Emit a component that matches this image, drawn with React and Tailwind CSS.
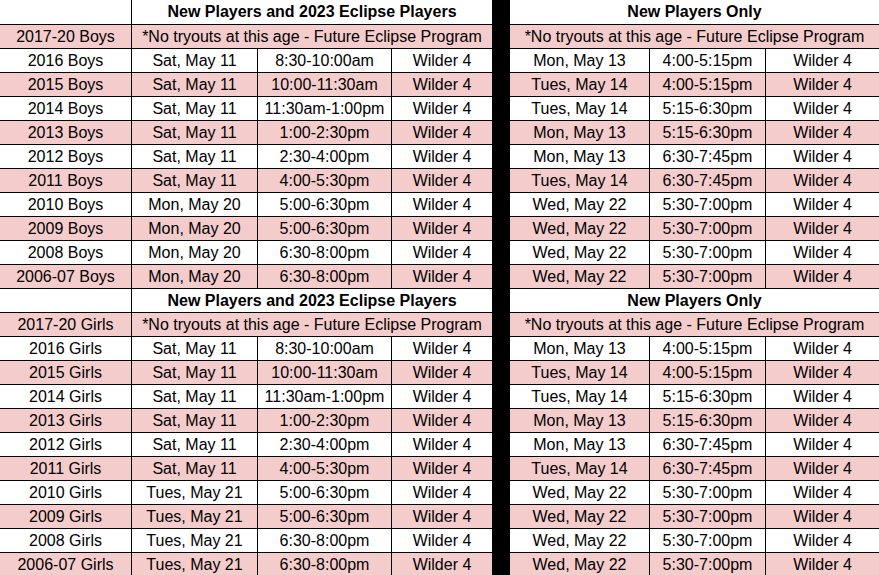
import React from "react";

const boys = [
  ["2016 Boys", "Sat, May 11", "8:30-10:00am", "Mon, May 13", "4:00-5:15pm"],
  ["2015 Boys", "Sat, May 11", "10:00-11:30am", "Tues, May 14", "4:00-5:15pm"],
  ["2014 Boys", "Sat, May 11", "11:30am-1:00pm", "Tues, May 14", "5:15-6:30pm"],
  ["2013 Boys", "Sat, May 11", "1:00-2:30pm", "Mon, May 13", "5:15-6:30pm"],
  ["2012 Boys", "Sat, May 11", "2:30-4:00pm", "Mon, May 13", "6:30-7:45pm"],
  ["2011 Boys", "Sat, May 11", "4:00-5:30pm", "Tues, May 14", "6:30-7:45pm"],
  ["2010 Boys", "Mon, May 20", "5:00-6:30pm", "Wed, May 22", "5:30-7:00pm"],
  ["2009 Boys", "Mon, May 20", "5:00-6:30pm", "Wed, May 22", "5:30-7:00pm"],
  ["2008 Boys", "Mon, May 20", "6:30-8:00pm", "Wed, May 22", "5:30-7:00pm"],
  ["2006-07 Boys", "Mon, May 20", "6:30-8:00pm", "Wed, May 22", "5:30-7:00pm"],
];

const girls = [
  ["2016 Girls", "Sat, May 11", "8:30-10:00am", "Mon, May 13", "4:00-5:15pm"],
  ["2015 Girls", "Sat, May 11", "10:00-11:30am", "Tues, May 14", "4:00-5:15pm"],
  ["2014 Girls", "Sat, May 11", "11:30am-1:00pm", "Tues, May 14", "5:15-6:30pm"],
  ["2013 Girls", "Sat, May 11", "1:00-2:30pm", "Mon, May 13", "5:15-6:30pm"],
  ["2012 Girls", "Sat, May 11", "2:30-4:00pm", "Mon, May 13", "6:30-7:45pm"],
  ["2011 Girls", "Sat, May 11", "4:00-5:30pm", "Tues, May 14", "6:30-7:45pm"],
  ["2010 Girls", "Tues, May 21", "5:00-6:30pm", "Wed, May 22", "5:30-7:00pm"],
  ["2009 Girls", "Tues, May 21", "5:00-6:30pm", "Wed, May 22", "5:30-7:00pm"],
  ["2008 Girls", "Tues, May 21", "6:30-8:00pm", "Wed, May 22", "5:30-7:00pm"],
  ["2006-07 Girls", "Tues, May 21", "6:30-8:00pm", "Wed, May 22", "5:30-7:00pm"],
];

const NOTE = "*No tryouts at this age - Future Eclipse Program";

function Sep() {
  return <div className="w-[18px] shrink-0 bg-black self-stretch" />;
}

function HeaderRow({ first }) {
  return (
    <div className={`flex bg-white border-b border-black ${first ? "h-[25px] leading-[24px]" : "h-[24px] leading-[23px]"}`}>
      <div className="w-[132px] shrink-0 border-r border-black" />
      <div className="w-[360px] shrink-0 text-center font-bold whitespace-nowrap">New Players and 2023 Eclipse Players</div>
      <Sep />
      <div className="w-[369px] shrink-0 text-center font-bold whitespace-nowrap">New Players Only</div>
    </div>
  );
}

function NoteRow({ label }) {
  return (
    <div className="flex bg-[#f4cccc] border-b border-black h-[24px] leading-[23px]">
      <div className="w-[132px] shrink-0 border-r border-black text-center whitespace-nowrap">{label}</div>
      <div className="w-[360px] shrink-0 text-center whitespace-nowrap">{NOTE}</div>
      <Sep />
      <div className="w-[369px] shrink-0 text-center whitespace-nowrap">{NOTE}</div>
    </div>
  );
}

function DataRow({ d, pink }) {
  const [label, d1, t1, d2, t2] = d;
  return (
    <div className={`flex border-b border-black h-[24px] leading-[23px] ${pink ? "bg-[#f4cccc]" : "bg-white"}`}>
      <div className="w-[132px] shrink-0 border-r border-black text-center whitespace-nowrap">{label}</div>
      <div className="w-[126px] shrink-0 border-r border-black text-center whitespace-nowrap">{d1}</div>
      <div className="w-[134px] shrink-0 border-r border-black text-center whitespace-nowrap">{t1}</div>
      <div className="w-[100px] shrink-0 text-center whitespace-nowrap">Wilder 4</div>
      <Sep />
      <div className="w-[140px] shrink-0 border-r border-black text-center whitespace-nowrap">{d2}</div>
      <div className="w-[116px] shrink-0 border-r border-black text-center whitespace-nowrap">{t2}</div>
      <div className="w-[113px] shrink-0 text-center whitespace-nowrap">Wilder 4</div>
    </div>
  );
}

export default function App() {
  return (
    <div
      className="w-[879px] h-[575px] overflow-hidden bg-white text-black text-[16px]"
      style={{ fontFamily: '"Liberation Sans", Arial, sans-serif' }}
    >
      <HeaderRow first />
      <NoteRow label="2017-20 Boys" />
      {boys.map((d, i) => (
        <DataRow key={d[0]} d={d} pink={i % 2 === 1} />
      ))}
      <HeaderRow />
      <NoteRow label="2017-20 Girls" />
      {girls.map((d, i) => (
        <DataRow key={d[0]} d={d} pink={i % 2 === 1} />
      ))}
    </div>
  );
}
